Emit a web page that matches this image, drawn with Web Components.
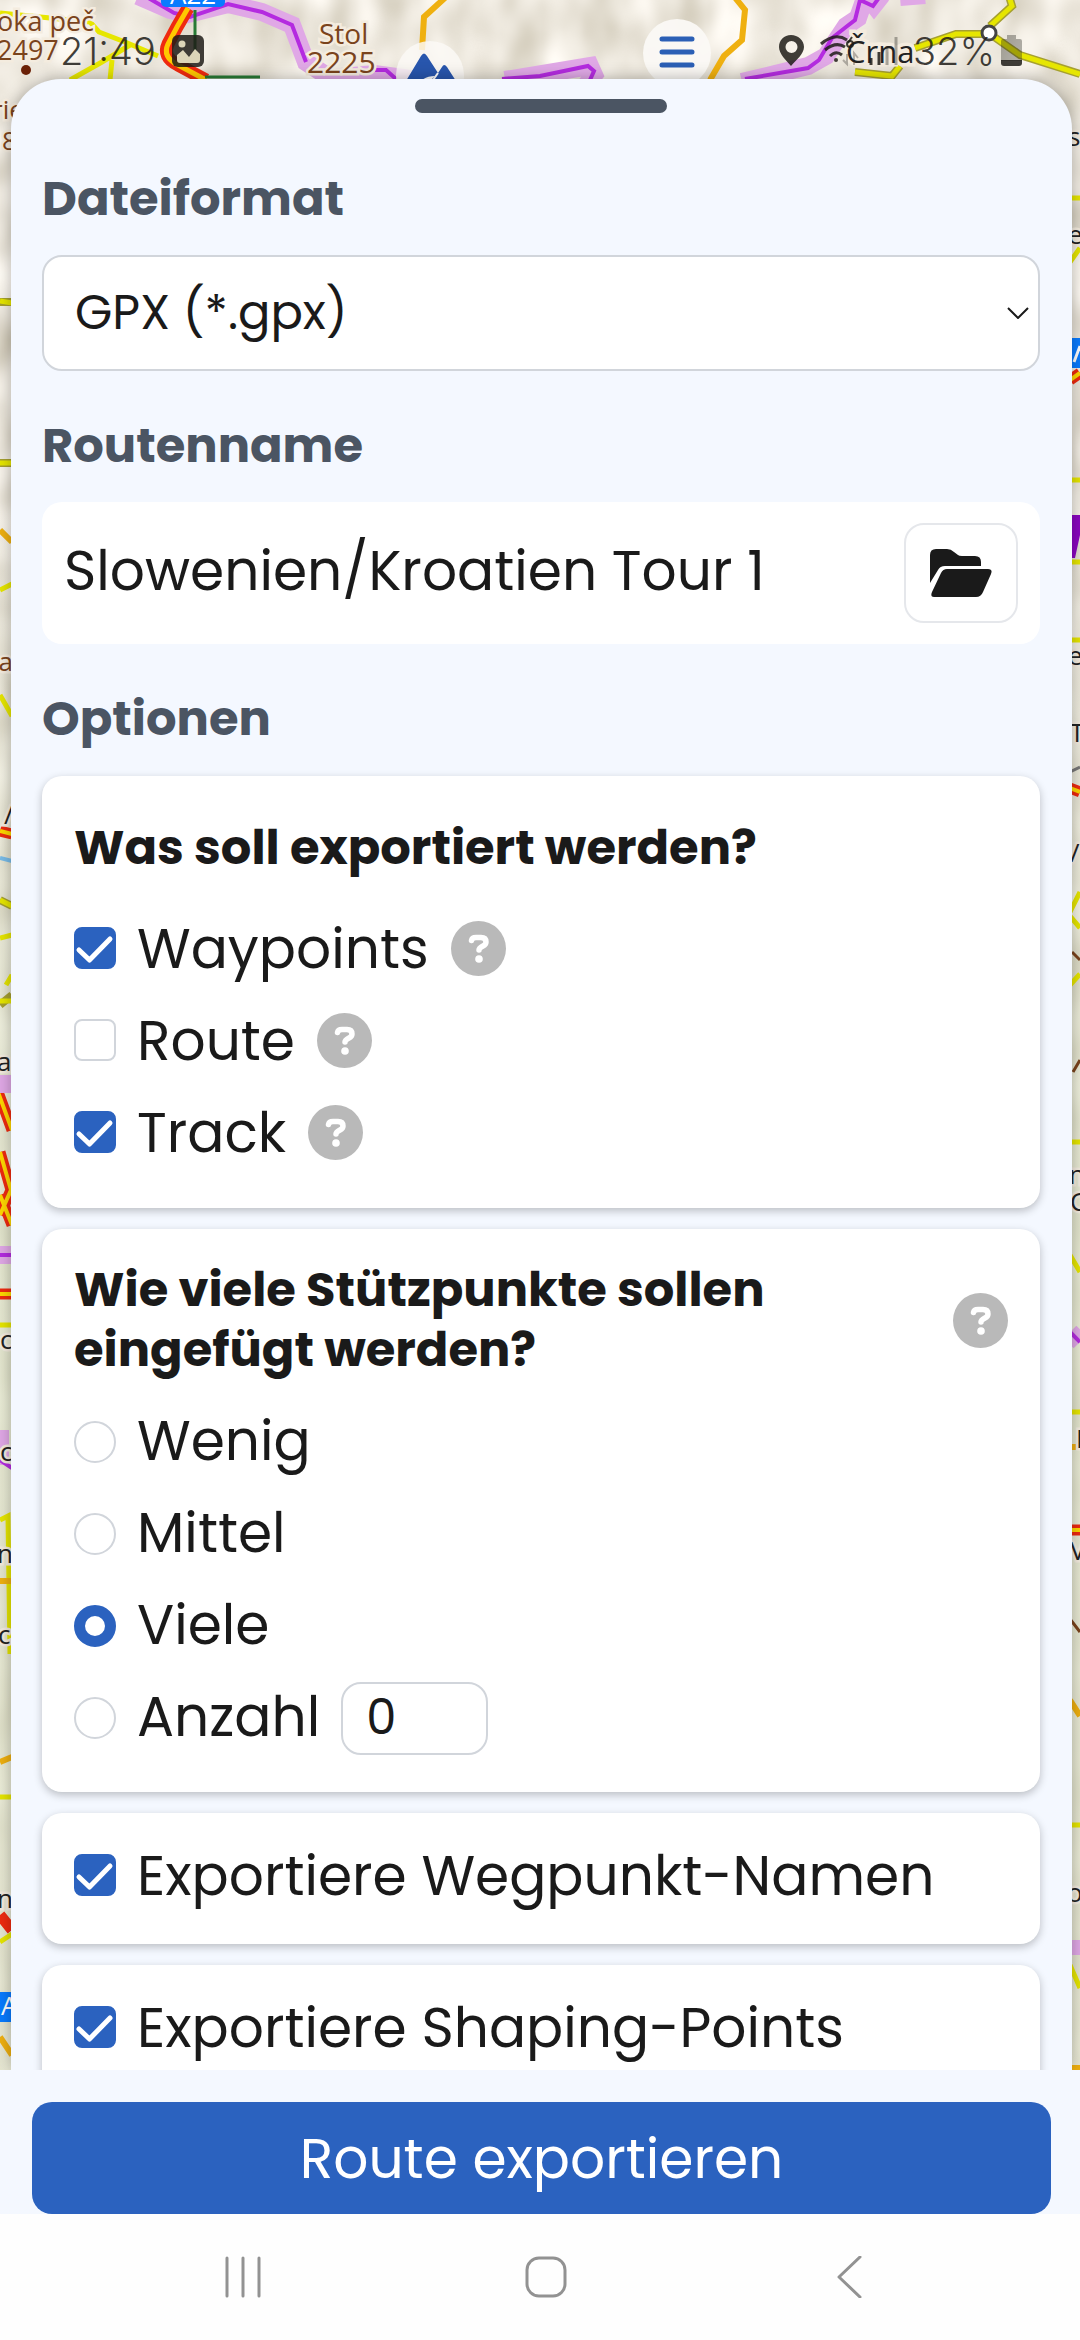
<!DOCTYPE html>
<html lang="de">
<head>
<meta charset="utf-8">
<meta name="viewport" content="width=device-width, initial-scale=1">
<title>Route exportieren</title>
<style>
  html, body { margin: 0; height: 100%; }
  body {
    font-family: Poppins, Inter, "Noto Sans", sans-serif;
    color: #1a1a1a;
    --blue: #2b62bf;
    --pale: #f4f8ff;
    --slate: #4b5563;
    --line: #d1d5db;
    --body: 55px;
    --title: 48px;
    --radius: 20px;
  }
</style>
</head>
<body>
<export-screen>
  <map-backdrop slot="map"></map-backdrop>
  <status-bar slot="status"></status-bar>
  <bottom-sheet>
    <format-field></format-field>
    <route-name-field></route-name-field>
    <options-section>
      <option-card class="list">
        <span slot="title">Was soll exportiert werden?</span>
        <check-option checked help>Waypoints</check-option>
        <check-option help>Route</check-option>
        <check-option checked help>Track</check-option>
      </option-card>
      <point-amount></point-amount>
      <option-card><check-option checked>Exportiere Wegpunkt-Namen</check-option></option-card>
      <option-card><check-option checked>Exportiere Shaping-Points</check-option></option-card>
    </options-section>
  </bottom-sheet>
  <export-footer slot="footer">Route exportieren</export-footer>
  <system-nav slot="nav"></system-nav>
</export-screen>

<script>
const BASE = `<style>
  *, *::before { box-sizing: border-box; }
  svg { display: block; }
  button, input, select { font: inherit; color: inherit; margin: 0; }
  h2, h3 { margin: 0; font-size: var(--title); line-height: 60px; font-weight: 700; }
  .section { display: block; font-size: var(--title); line-height: 60px; font-weight: 700; color: var(--slate); }
</style>`;

function define(name, markup) {
  customElements.define(name, class extends HTMLElement {
    constructor() {
      super();
      const root = this.attachShadow({ mode: 'open' });
      root.innerHTML = BASE + (typeof markup === 'function' ? markup(this) : markup);
    }
  });
}

define('export-screen', `<style>
  :host { display: flex; flex-direction: column; height: 100vh; position: relative; overflow: hidden; }
  slot[name=map] { display: block; position: absolute; inset: 0; }
  ::slotted(*) { position: relative; }
</style>
<slot name="map"></slot><slot name="status"></slot><slot></slot><slot name="footer"></slot><slot name="nav"></slot>`);

define('map-backdrop', `<style>
  :host { position: absolute !important; inset: 0; overflow: hidden; background: #ddd3bf; }
  svg { position: absolute; left: 0; top: 0; }
  svg.east { left: auto; right: 0; }
  .y { stroke: #e6e600; stroke-width: 5; fill: none; }
  .ye { stroke: #a6a030; stroke-width: 8; fill: none; }
  .o { stroke: #efb010; stroke-width: 6; fill: none; }
  .r { stroke: #ef2a10; stroke-width: 11; fill: none; }
  .p { stroke: #b42be0; stroke-width: 4; fill: none; }
  .pw { stroke: #e0a8e6; stroke-width: 18; fill: none; }
  text { font-family: "Open Sans", "Noto Sans", sans-serif; fill: #222; stroke: #f4ecdf; stroke-width: 5; paint-order: stroke; font-size: 26px; }
  .b { fill: #7a431c; }
</style>
<svg width="1080" height="2340" viewBox="0 0 1080 2340" aria-hidden="true">
  <defs>
    <filter id="relief" x="0" y="0" width="100%" height="100%">
      <feTurbulence type="fractalNoise" baseFrequency="0.024 0.016" numOctaves="2" seed="8"/>
      <feColorMatrix values=".6 0 0 0 .55  .62 0 0 0 .50  .7 0 0 0 .38  0 0 0 0 1"/>
    </filter>
    <linearGradient id="plain" x1="0" y1="0" x2="0" y2="1"><stop offset="0" stop-color="#e3e8cc" stop-opacity="0"/><stop offset=".4" stop-color="#e3e8cc" stop-opacity=".75"/><stop offset="1" stop-color="#e3e4cc" stop-opacity=".7"/></linearGradient>
  </defs>
  <rect width="1080" height="2340" filter="url(#relief)" style="color-interpolation-filters:sRGB"/>
  <rect y="500" width="1080" height="1840" fill="url(#plain)"/>
  <path class="pw" d="M138 -4 L170 10 L188 14 L228 4 L262 12 L292 25 L306 62 L330 78 L375 74 L405 78 L450 88 M505 80 L590 66 L594 75 L582 90 M742 82 L808 66 L826 56 L846 26 L858 18 L866 -5 L874 5 L882 -5 M900 -3 L925 -5"/>
  <path class="p" d="M145 -4 L174 13 L190 17 L228 4 L262 12 L292 25 L306 62 M375 70 L386 70 L396 79 M502 79 L540 76 L588 66 L594 71 L590 80 M745 79 L808 68 L819 60 L832 38 L846 27 L855 20 L860 0 L873 6 L881 -5"/>
  <path class="y" d="M0 13 L90 22 L99 32 L125 42 L158 56 M130 45 L102 62 L70 80 M112 60 L110 80"/>
  <path class="r" d="M188 8 L177 27 L168 44 Q162 57 178 65 L206 80" style="stroke-width:13"/>
  <path class="y" d="M188 8 L177 27 L168 44 Q162 57 178 65 L206 80" style="stroke:#ffc800"/>
  <path d="M195 10 L195 60 M205 77 H260" stroke="#277a35" stroke-width="3" fill="none"/>
  <rect x="161" y="-24" width="64" height="31" rx="5" fill="#087bff"/><text x="170" y="4" style="fill:#fff;stroke:none">A22</text>
  <path class="o" d="M447 -4 L424 17 L422 50 M733 -5 L745 10 L742 40 L724 56 L710 80"/>
  <path class="ye" d="M1009 -4 L1012 6 L990 26 M990 34 L956 34 L915 48 M990 34 L1020 55 L1080 74 M900 66 L892 76 L855 72"/>
  <path class="y" d="M1009 -4 L1012 6 L990 26 M990 34 L956 34 L915 48 M990 34 L1020 55 L1080 74 M900 66 L892 76 L855 72"/>
  <circle cx="989" cy="33" r="7" fill="#fff" stroke="#444" stroke-width="3"/>
  <text class="b" x="-3" y="31" style="font-size:27px">oka peč</text><text class="b" x="-3" y="60" style="font-size:27px">2497</text>
  <circle cx="26" cy="70" r="5" fill="#6b2107"/>
  <text class="b" x="319" y="44" style="font-size:28px">Stol</text><text class="b" x="307" y="73" style="font-size:30px">2225</text>
  <text x="846" y="63" style="font-size:31px;stroke-width:7">Črna</text>
  <text class="b" x="-8" y="119">rie</text><text class="b" x="2" y="150">8</text>
  <path class="ye" d="M0 302 H11 M0 463 H12 M0 900 L12 906 M0 1005 L12 995"/>
  <path class="y" d="M0 301 L12 303 M0 463 H12 M0 590 L12 584 M0 695 L12 716 M0 900 L12 906 M0 938 L12 935 M0 1001 H12 M6 985 L12 975 M0 1325 H12 M0 1520 L8 1516 L10 1654 M0 1797 H12 M0 1942 L12 1934"/>
  <path class="o" d="M0 530 L12 542 M0 1163 L12 1175 M0 1581 H12 M0 1762 L12 1757 M0 2037 L12 2055"/>
  <path d="M0 858 L12 861" stroke="#79bce8" stroke-width="4"/>
  <path class="r" d="M0 831 L12 834 M-2 1092 L12 1130 M0 1152 L11 1190 L0 1215 M0 1195 L12 1225 M0 1294 H12 M0 1915 L12 1930"/>
  <path d="M0 831 L12 834 M-2 1092 L12 1130 M0 1152 L11 1190 L0 1215 M0 1195 L12 1225 M0 1294 H12" stroke="#ffd800" stroke-width="4" fill="none"/>
  <path class="pw" d="M0 1084 H12 M0 1255 H12 M0 1430 V1465"/><path class="p" d="M0 1255 H12 M0 1460 L12 1468"/>
  <text class="b" x="-8" y="671">la</text><text x="4" y="824">/</text><text x="-3" y="1071">a</text><text x="0" y="1349">c</text><text x="0" y="1461">c</text><text x="-3" y="1563">n</text><text x="-2" y="1644">c</text><text x="-3" y="1908">n</text>
  <rect y="1992" width="14" height="30" fill="#087bff"/><text x="1" y="2015" style="fill:#fff;stroke:none">A</text>
</svg>
<svg class="east" width="10" height="2340" viewBox="1070 0 10 2340" aria-hidden="true">
  <path class="y" d="M1070 198 H1080 M1070 262 L1080 248 M1070 480 H1080 M1070 562 H1080 M1070 640 H1080 M1070 912 L1080 892 M1070 916 L1080 928 M1070 985 L1080 974 M1070 1142 H1080 M1070 1255 L1080 1272 M1070 1412 H1080 M1070 1825 H1080 M1070 1965 L1080 1988"/>
  <path class="o" d="M1070 1447 H1076 M1070 1700 L1080 1716 M1070 2068 H1080"/>
  <path class="r" d="M1070 380 L1080 373 M1070 788 L1080 792 M1070 1530 H1080"/>
  <path d="M1070 380 L1080 373 M1070 788 L1080 792 M1070 1530 H1080" stroke="#ffd800" stroke-width="4" fill="none"/>
  <path class="pw" d="M1070 1332 L1080 1342 M1074 1940 V1955"/><path class="p" d="M1070 1332 L1080 1342"/>
  <rect x="1070" y="338" width="12" height="30" fill="#087bff"/><path d="M1074 362 L1080 346" stroke="#fff" stroke-width="3"/>
  <path d="M1071 515 H1080 V535 L1075 558 H1071 Z" fill="#8a06c0"/>
  <path d="M1070 772 L1080 767" stroke="#777" stroke-width="3"/>
  <path d="M1073 1072 L1080 1060 M1072 952 L1080 960 M1070 1619 L1080 1632" stroke="#7a431c" stroke-width="3"/>
  <text x="1068" y="146">s</text><text x="1068" y="244">e</text><text x="1068" y="665">e</text><text x="1070" y="742">T</text><text x="1070" y="862">/</text><text x="1069" y="1184">n</text><text x="1070" y="1211">C</text><text x="1076" y="1448">L</text><text x="1070" y="1560">V</text><text x="1067" y="1902">o</text>
</svg>`);

define('status-bar', `<style>
  :host { display: block; height: 79px; flex: none; overflow: hidden; font-family: Inter, sans-serif; color: rgba(30,28,24,.85); }
  .chips { position: absolute; left: 0; right: 0; top: 18px; display: flex; justify-content: center; gap: 179px; padding-left: 27px; }
  .chips svg:first-child { margin-top: 23px; }
  .row { position: relative; display: flex; align-items: center; justify-content: space-between; padding: 28px 58px 0 60px; height: 74px; }
  .side { display: flex; align-items: center; }
  span { font-size: 38px; line-height: 46px; font-weight: 300; }
</style>
<div class="chips" aria-hidden="true">
  <svg width="68" height="68" viewBox="0 0 68 68"><circle cx="34" cy="34" r="34" fill="#fbf9f5" opacity=".84"/><path d="M10 40 L25 15 Q28 10 31 15 L42 32 L46 26 Q48 22 51 26 L60 40Z" fill="#2856ad"/><path d="M25 40 Q30 35 39 35 L34 40Z" fill="#fff"/><path d="M42 32 L37 39" stroke="#fff" stroke-width="2"/></svg>
  <svg width="68" height="68" viewBox="0 0 68 68"><circle cx="34" cy="35" r="34" fill="#fbf9f5" opacity=".94"/><path d="M19 21H49M19 34H49M19 47H49" stroke="#2b5fb5" stroke-width="5" stroke-linecap="round"/></svg>
</div>
<div class="row">
  <div class="side" style="gap:16px"><span>21:49</span>
    <svg width="32" height="32" viewBox="0 0 32 32"><rect width="32" height="32" rx="6" fill="currentColor"/><circle cx="10" cy="9" r="3.5" fill="#dcd5b8"/><path d="M5 20 L11 15 L17 22 L23 14 L28 19 V25 Q28 28 25 28 H8 Q5 28 5 25Z" fill="#dcd5b8"/></svg>
  </div>
  <div class="side">
    <svg width="134" height="34" viewBox="0 0 134 34" fill="none" stroke="currentColor"><path d="M12 1 C5 1 0 6 0 13 C0 20 7 26 12 32 C17 26 25 20 25 13 C25 6 19 1 12 1Z M12.500 7A6 6 0 1 1 12.500 19A6 6 0 1 1 12.500 7Z" fill="currentColor" fill-rule="evenodd" stroke="none"/>
      <path d="M42 10 Q56 -2 68 6 M46 16 Q57 7 66 13 M51 22 Q57 16 63 21" stroke-width="3"/><circle cx="57" cy="26" r="2" fill="currentColor" stroke="none"/><path d="M73 3 L69 9" stroke-width="2"/><circle cx="71" cy="10" r="3" stroke-width="2"/>
      <path d="M68 20 V30 L64 26 M75 31 V19 L79 24" stroke-width="2" opacity=".35"/><path d="M92 31 V24 M100 31 V18" stroke-width="3"/><path d="M108 31 V12 M117 31 V3" stroke-width="3" opacity=".4"/></svg>
    <span>32%</span>
    <svg width="21" height="32" viewBox="0 0 21 32" style="margin-left:6px"><path d="M6 0H15V4H19Q21 4 21 6V26H0V6Q0 4 2 4H6Z" fill="currentColor" opacity=".4"/><path d="M0 25H21V28Q21 31 18 31H3Q0 31 0 28Z" fill="currentColor"/></svg>
  </div>
</div>`);

define('bottom-sheet', `<style>
  :host { display: flex; flex-direction: column; flex: 1; min-height: 0; overflow: hidden; margin: 0 8px 0 11px; padding: 20px 32px 0 31px; gap: 45px; box-sizing: border-box; background: var(--pale); border-radius: 50px 50px 0 0; box-shadow: 0 0 16px rgba(0,0,0,.3); }
  .grip { align-self: center; width: 252px; height: 14px; flex: none; border-radius: 7px; background: var(--slate); margin-bottom: 11px; }
  ::slotted(*) { flex: none; }
</style><div class="grip"></div><slot></slot>`);

define('format-field', `<style>
  :host { display: flex; flex-direction: column; gap: 26px; }
  .box { display: grid; align-items: center; }
  select, svg { grid-area: 1 / 1; }
  select { appearance: none; width: 100%; height: 116px; padding: 0 31px 2px; border: 2px solid var(--line); border-radius: var(--radius); background: #fff; font-size: var(--title); }
  svg { justify-self: end; margin-right: 11px; pointer-events: none; }
</style>
<label class="section" for="format">Dateiformat</label>
<div class="box"><select id="format"><option>GPX (*.gpx)</option></select>
<svg width="22" height="12" viewBox="0 0 22 12"><path d="M1 1 L11 11 L21 1" fill="none" stroke="#1a1a1a" stroke-width="2"/></svg></div>`);

define('route-name-field', `<style>
  :host { display: flex; flex-direction: column; gap: 26px; }
  .box { display: flex; align-items: center; gap: 20px; height: 142px; padding: 0 22px; border-radius: var(--radius); background: #fff; }
  input { flex: 1; min-width: 0; border: 0; padding: 0 0 5px; outline: 0; background: none; font-size: var(--body); }
  button { width: 114px; height: 100px; padding: 0; display: grid; place-items: center; border: 2px solid #e5e7eb; border-radius: var(--radius); background: #fff; }
</style>
<label class="section" for="name">Routenname</label>
<div class="box"><input id="name" type="text" value="Slowenien/Kroatien Tour 1">
<button type="button" aria-label="Ordner öffnen"><svg width="62" height="48" viewBox="0 0 62 48" fill="#1a1a1a"><path d="M0 34 V6 Q0 0 6 0 H17 Q21 0 24 3 L28 6 Q29 7 32 7 H45 Q51 7 51 13 V17 H15 Q10 17 8 21Z"/><path d="M2 43 L11 24 Q13 20 17 20 H58 Q63 20 61 25 L53 43 Q51 48 46 48 H4 Q0 48 2 43Z"/></svg></button></div>`);

define('options-section', `<style>
  :host { display: flex; flex-direction: column; gap: 21px; }
  h2 { margin-bottom: 6px; }
</style><h2 class="section">Optionen</h2><slot></slot>`);

const CARD = `:host { display: block; box-sizing: border-box; border-radius: var(--radius); background: #fff; box-shadow: 0 3px 9px rgba(0,0,0,.24); }`;

define('option-card', `<style>${CARD}
  :host { padding: 16px 32px 23px; }
  :host(.list) { padding: 42px 32px 30px; }
  h3 { display: none; }
  :host(.list) h3 { display: block; margin-bottom: 24px; }
</style><h3><slot name="title"></slot></h3><slot></slot>`);

define('help-button', `<style>
  :host { display: block; flex: none; }
  button { display: block; padding: 0; border: 0; background: none; }
</style><button type="button" aria-label="Hilfe"><svg width="55" height="55" viewBox="0 0 55 55"><circle cx="27.500" cy="27.500" r="27.500" fill="#b9b9b9"/><path d="M20.500 19.500 Q21 16.500 25 16.500 H30 Q35 16.500 35 21 Q35 23.500 32 25 Q28 27 28 29" fill="none" stroke="#fff" stroke-width="5.500" stroke-linecap="round" stroke-linejoin="round"/><circle cx="28" cy="38" r="3.800" fill="#fff"/></svg></button>`);

define('check-option', el => `<style>
  :host { display: flex; align-items: center; gap: 22px; height: 92px; font-size: var(--body); }
  label { display: flex; align-items: center; gap: 21px; line-height: 84px; white-space: nowrap; }
  .text { padding-top: 2px; }
  .tick { display: grid; }
  input, .tick svg { grid-area: 1 / 1; }
  input { appearance: none; width: 42px; height: 42px; border: 2px solid var(--line); border-radius: 8px; background: #fff; }
  input:checked { background: var(--blue); border-color: var(--blue); }
  .tick svg { visibility: hidden; pointer-events: none; }
  input:checked + svg { visibility: visible; }
</style><label><span class="tick"><input type="checkbox" ${el.hasAttribute('checked') ? 'checked' : ''}><svg width="42" height="42" viewBox="0 0 42 42"><path d="M5 23 L15.500 33 L36 12" fill="none" stroke="#fff" stroke-width="5" stroke-linecap="round" stroke-linejoin="round"/></svg></span><span class="text"><slot></slot></span></label>${el.hasAttribute('help') ? '<help-button></help-button>' : ''}`);

define('point-amount', `<style>${CARD}
  :host { padding: 31px 32px 28px; }
  .head { display: flex; align-items: center; justify-content: space-between; gap: 120px; margin-bottom: 16px; }
  .row { display: flex; align-items: center; height: 92px; gap: 21px; font-size: var(--body); }
  label { display: flex; align-items: center; gap: 21px; line-height: 84px; }
  .text { padding-bottom: 2px; }
  [type=radio] { appearance: none; width: 42px; height: 42px; border: 2px solid var(--line); border-radius: 50%; background: #fff; }
  [type=radio]:checked { border: 11px solid var(--blue); }
  [type=text] { width: 147px; height: 73px; padding: 0 23px; border: 2px solid var(--line); border-radius: var(--radius); background: #fff; font-size: var(--title); }
</style>
<div class="head"><h3>Wie viele Stützpunkte sollen eingefügt werden?</h3><help-button></help-button></div>
<div class="row"><label><input type="radio" name="amount"><span class="text">Wenig</span></label></div>
<div class="row"><label><input type="radio" name="amount"><span class="text">Mittel</span></label></div>
<div class="row"><label><input type="radio" name="amount" checked><span class="text">Viele</span></label></div>
<div class="row"><label><input type="radio" name="amount"><span class="text">Anzahl</span></label><input type="text" inputmode="numeric" aria-label="Anzahl der Stützpunkte" value="0"></div>`);

define('export-footer', `<style>
  :host { display: block; flex: none; padding: 32px 29px 0 32px; background: var(--pale); }
  button { display: block; width: 100%; height: 112px; padding: 0; border: 0; border-radius: var(--radius); background: var(--blue); color: #fff; font-size: var(--body); }
</style><button type="button"><slot></slot></button>`);

define('system-nav', `<style>
  :host { display: flex; flex: none; align-items: center; justify-content: space-between; height: 126px; padding: 0 171px 0 183px; box-sizing: border-box; background: #fefefe; }
  button { width: 120px; height: 100px; padding: 0; border: 0; background: none; display: grid; place-items: center; }
  svg { fill: none; stroke: #929292; stroke-width: 3; }
</style>
<button type="button" aria-label="Letzte Apps"><svg width="40" height="42" viewBox="0 0 40 42"><path d="M4 2V40M20 2V40M36 2V40" stroke-linecap="round"/></svg></button>
<button type="button" aria-label="Startseite"><svg width="42" height="42" viewBox="0 0 42 42"><rect x="2" y="2" width="38" height="38" rx="12"/></svg></button>
<button type="button" aria-label="Zurück"><svg width="26" height="42" viewBox="0 0 26 42"><path d="M24 1 L3 21 L24 41" stroke-linecap="round" stroke-linejoin="round"/></svg></button>`);
</script>
</body>
</html>
